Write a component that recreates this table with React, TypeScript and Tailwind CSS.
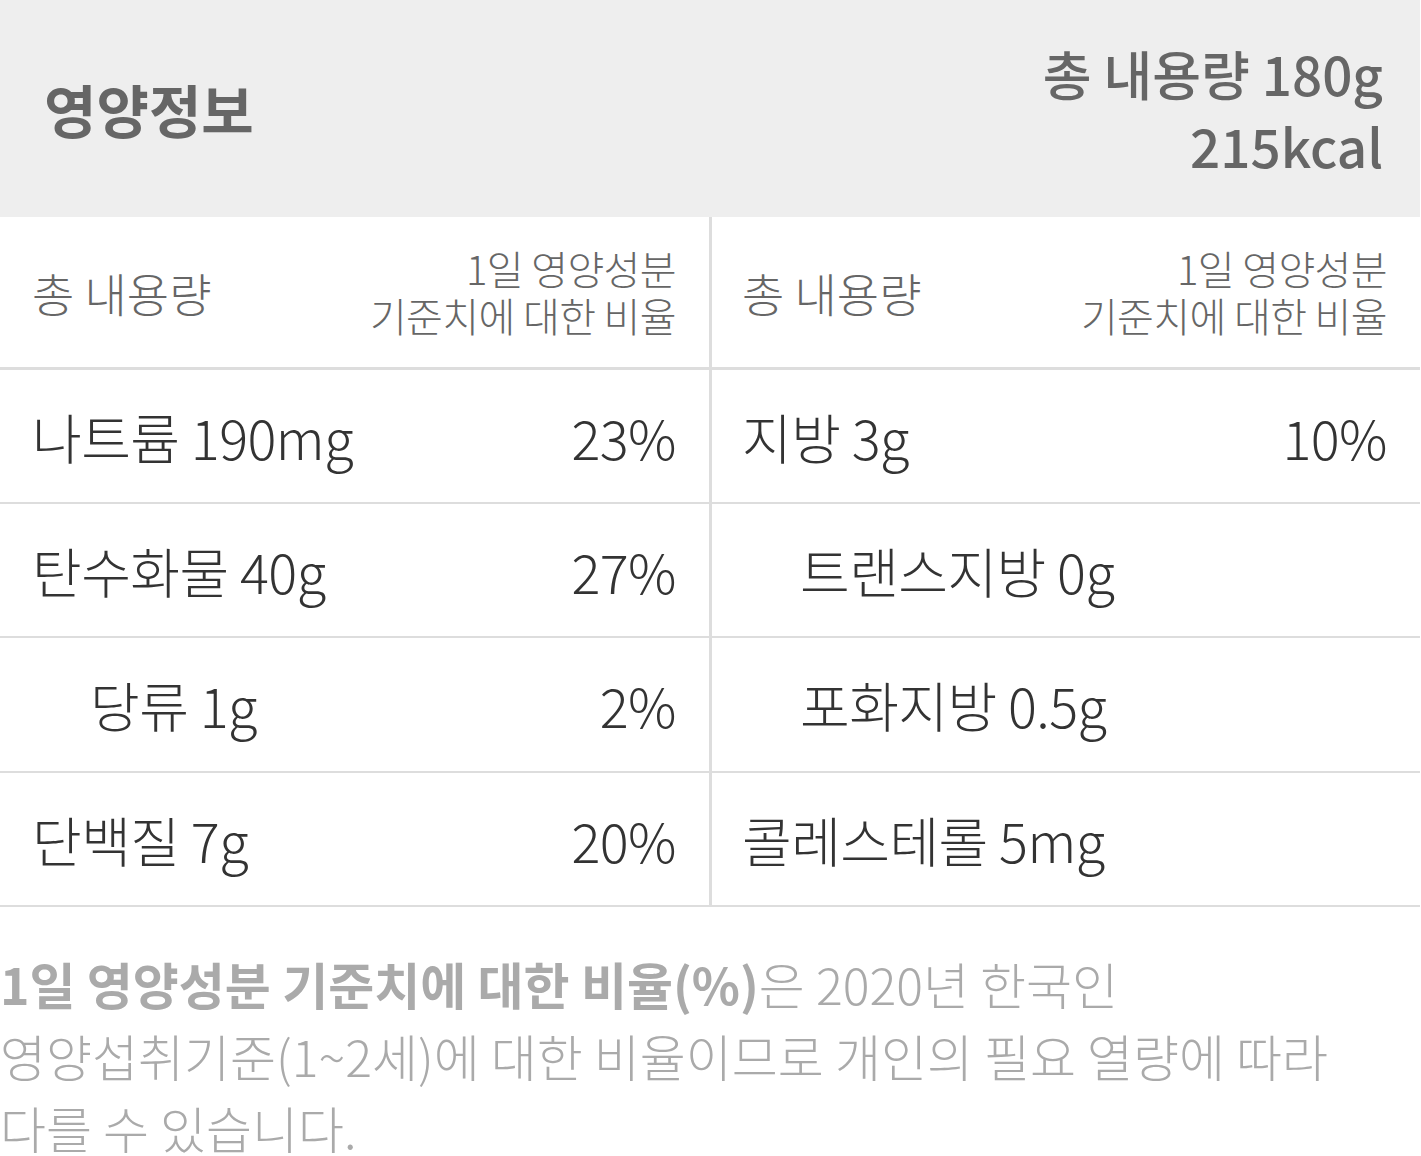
const font = { fontFamily: '"Noto Sans CJK KR", "Noto Sans", sans-serif' };

type Row = { label: string; pct?: string; indent?: boolean; h: string };

const left: Row[] = [
  { label: "나트륨 190mg", pct: "23%", h: "h-[134px]" },
  { label: "탄수화물 40g", pct: "27%", h: "h-[134px]" },
  { label: "당류 1g", pct: "2%", indent: true, h: "h-[135px]" },
  { label: "단백질 7g", pct: "20%", h: "h-[134px]" },
];

const right: Row[] = [
  { label: "지방 3g", pct: "10%", h: "h-[134px]" },
  { label: "트랜스지방 0g", indent: true, h: "h-[134px]" },
  { label: "포화지방 0.5g", indent: true, h: "h-[135px]" },
  { label: "콜레스테롤 5mg", h: "h-[134px]" },
];

const HeadCell = ({ side }: { side: "l" | "r" }) => (
  <div
    className={`flex h-[153px] items-center justify-between border-b-[3px] border-[#dddddd] text-[#666666] ${
      side === "l" ? "border-r-[3px] pl-[32px] pr-[33px]" : "pl-[30px] pr-[33px]"
    }`}
  >
    <span className="text-[46px] font-light">총 내용량</span>
    <div className="text-right text-[40px] font-light leading-[47px] tracking-[-0.015em]">
      <div>1일 영양성분</div>
      <div>기준치에 대한 비율</div>
    </div>
  </div>
);

const Cell = ({ row, side }: { row: Row; side: "l" | "r" }) => (
  <div
    className={`flex ${row.h} items-center justify-between border-b-2 border-[#dddddd] text-[54px] font-light tracking-[-0.01em] text-[#333333] ${
      side === "l" ? "border-r-[3px] pl-[32px] pr-[33px]" : "pl-[30px] pr-[33px]"
    }`}
  >
    <span className={row.indent ? "pl-[58px]" : ""}>{row.label}</span>
    {row.pct && <span>{row.pct}</span>}
  </div>
);

export default function App() {
  return (
    <div className="w-[1420px] bg-white" style={font}>
      <header className="flex h-[217px] items-center justify-between bg-[#eeeeee] pl-[44px] pr-[37px] text-[#666666]">
        <h1 className="text-[57px] font-bold">영양정보</h1>
        <div className="text-right text-[53px] font-medium leading-[72px]">
          <div>총 내용량 180g</div>
          <div>215kcal</div>
        </div>
      </header>

      <div className="grid grid-cols-[712px_708px]">
        <HeadCell side="l" />
        <HeadCell side="r" />
        {left.map((row, i) => (
          <div key={i} className="contents">
            <Cell row={row} side="l" />
            <Cell row={right[i]} side="r" />
          </div>
        ))}
      </div>

      <div className="mt-[40px] text-[50px] font-light leading-[72px] text-[#aaaaaa]">
        <div>
          <b className="font-bold">1일 영양성분 기준치에 대한 비율(%)</b>은 2020년 한국인
        </div>
        <div>영양섭취기준(1~2세)에 대한 비율이므로 개인의 필요 열량에 따라</div>
        <div>다를 수 있습니다.</div>
      </div>
    </div>
  );
}
